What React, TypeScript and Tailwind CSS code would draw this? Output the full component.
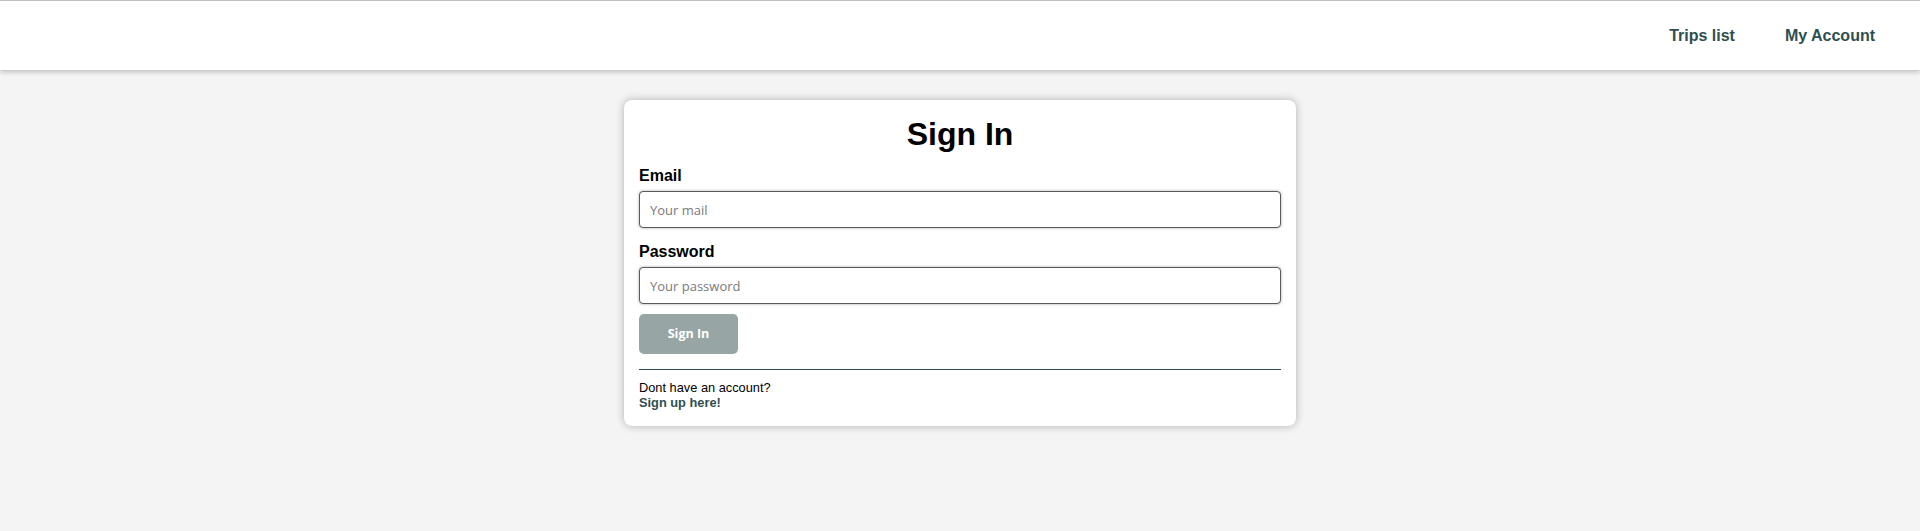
import React from "react";

export default function App() {
  return (
    <div className="min-h-[531px] bg-[#f4f4f4] font-['Liberation_Sans',Arial,sans-serif]">
      <nav className="relative z-10 flex h-[70px] items-center justify-end border-t border-[#bdbdbd] bg-white pr-[45px] shadow-[0_2px_5px_rgba(0,0,0,0.22)]">
        <div className="flex items-center gap-[50px] text-[16px] font-bold leading-[18px] text-[#2f4f4f]">
          <a href="#">Trips list</a>
          <a href="#">My Account</a>
        </div>
      </nav>
      <div className="flex justify-center pt-[30px]">
        <div className="w-[672px] rounded-[8px] bg-white px-[15px] pt-4 pb-[16px] shadow-[0_0_8px_rgba(0,0,0,0.28)]">
          <h1 className="text-center text-[32px] font-bold leading-[37px] text-black">Sign In</h1>
          <form className="flex flex-col" onSubmit={(e) => e.preventDefault()}>
            <label className="mt-[11px] text-[16px] font-bold leading-6 text-black">Email</label>
            <input
              type="email"
              placeholder="Your mail"
              className="mt-[3px] h-[37px] w-full rounded-[4px] border border-[#5a5a5a] bg-white px-[10px] font-['Open_Sans',sans-serif] text-[13px] text-black shadow-[0_0_3px_rgba(0,0,0,0.35)] outline-none placeholder:text-[#7a7a7a]"
            />
            <label className="mt-[12px] text-[16px] font-bold leading-6 text-black">Password</label>
            <input
              type="password"
              placeholder="Your password"
              className="mt-[3px] h-[37px] w-full rounded-[4px] border border-[#5a5a5a] bg-white px-[10px] font-['Open_Sans',sans-serif] text-[13px] text-black shadow-[0_0_3px_rgba(0,0,0,0.35)] outline-none placeholder:text-[#7a7a7a]"
            />
            <button
              type="submit"
              className="mt-[10px] h-[40px] w-[99px] rounded-[5px] bg-[#97a5a5] font-['Open_Sans',sans-serif] text-[12.5px] font-bold text-white"
            >
              Sign In
            </button>
          </form>
          <hr className="mt-[15px] border-0 border-t border-[#2f4f4f]" />
          <div className="mt-[10px] text-[12.8px] leading-[15px] text-black">
            <p>Dont have an account?</p>
            <a href="#" className="font-bold text-[#2f4f4f]">Sign up here!</a>
          </div>
        </div>
      </div>
    </div>
  );
}
